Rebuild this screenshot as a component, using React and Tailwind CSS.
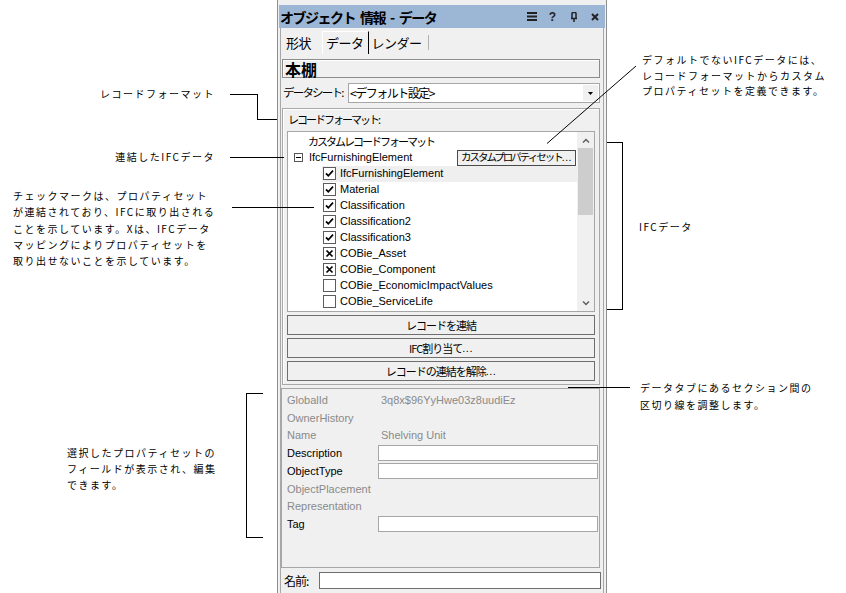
import React from "react";

const jp = "font-['Liberation_Sans','Noto_Sans_CJK_JP',sans-serif]";
const note = "font-['Noto_Sans_CJK_JP',sans-serif] text-[10px] tracking-[1.5px] text-black";

const Check = ({ mark }) => (
  <svg width="13" height="13" viewBox="0 0 13 13" className="shrink-0">
    <rect x="0.5" y="0.5" width="12" height="12" fill="#fff" stroke="#5c5c5c" />
    {mark === "check" && (
      <path d="M3 6.3 L5.3 8.8 L10 3.6" fill="none" stroke="#000" strokeWidth="1.7" />
    )}
    {mark === "x" && (
      <path d="M3.5 3.5 L9.5 9.5 M9.5 3.5 L3.5 9.5" fill="none" stroke="#000" strokeWidth="1.7" />
    )}
  </svg>
);

const Dots = () => <span className="tracking-[0.5px] font-['Liberation_Sans',sans-serif]">...</span>;

const items = [
  ["IfcFurnishingElement", "check", true],
  ["Material", "check"],
  ["Classification", "check"],
  ["Classification2", "check"],
  ["Classification3", "check"],
  ["COBie_Asset", "x"],
  ["COBie_Component", "x"],
  ["COBie_EconomicImpactValues", ""],
  ["COBie_ServiceLife", ""],
];

const fields = [
  ["GlobalId", "value", "3q8x$96YyHwe03z8uudiEz", 18],
  ["OwnerHistory", "gray", "", 18],
  ["Name", "value", "Shelving Unit", 17],
  ["Description", "input", "", 18],
  ["ObjectType", "input", "", 18],
  ["ObjectPlacement", "gray", "", 18],
  ["Representation", "gray", "", 17],
  ["Tag", "input", "", 18],
];

const buttons = [
  ["レコードを連結", false],
  ["IFC割り当て", true],
  ["レコードの連結を解除", true],
];

function Panel() {
  return (
    <div className={`w-[330px] h-[593px] shrink-0 border-x border-[#8f8f8f] bg-[#f0f0f0] pt-[5px] flex flex-col ${jp}`}>
      {/* title bar */}
      <div className="h-[23px] mx-[1px] bg-[#9cb6d6] flex items-center pl-[1px]">
        <div className="flex items-center gap-[5px] text-[14px] font-bold tracking-[-1.5px] leading-none font-['Noto_Sans_CJK_JP',sans-serif]">
          <span>オブジェクト</span>
          <span>情報</span>
          <span>-</span>
          <span>データ</span>
        </div>
        <div className="ml-auto flex items-center">
          <div className="w-[21px] flex justify-center">
            <svg width="10" height="9" viewBox="0 0 10 9">
              <path d="M0 1H10M0 4.5H10M0 8H10" stroke="#222" strokeWidth="2" />
            </svg>
          </div>
          <div className="w-[21px] flex justify-center text-[12px] font-bold leading-none text-[#222]">?</div>
          <div className="w-[21px] flex justify-center">
            <svg width="8" height="10" viewBox="0 0 8 10">
              <path d="M2 0.5V6M6 0.5V6M1 6.5H7M4 6.5V10M2 0.5H6" stroke="#222" strokeWidth="1.5" fill="none" />
            </svg>
          </div>
          <div className="w-[21px] flex justify-center">
            <svg width="8" height="8" viewBox="0 0 8 8">
              <path d="M1 1L7 7M7 1L1 7" stroke="#222" strokeWidth="2" />
            </svg>
          </div>
        </div>
      </div>

      <div className="flex-1 mx-[2px] border-x border-[#a8a8a8] flex flex-col">
        {/* tabs */}
        <div className="h-[23px] mt-[3px] flex items-stretch text-[13px] tracking-[-0.5px] font-['Noto_Sans_CJK_JP',sans-serif]">
          <span className="ml-[5px] flex items-center">形状</span>
          <div className="ml-[11px] flex items-center border-l border-t border-white border-r border-r-black pl-[3px] pr-[4px]">
            データ
          </div>
          <span className="ml-[3px] flex items-center">レンダー</span>
          <div className="ml-[6px] my-[4px] w-px bg-[#b0b0b0]" />
        </div>

        {/* record name */}
        <div className="mt-[5px] ml-[1px] mr-[3px] h-[19px] border border-[#8c8c8c] shadow-[inset_1px_1px_0_#fff] flex items-center pl-[2px]">
          <span className="text-[16px] font-bold leading-none font-['Noto_Sans_CJK_JP',sans-serif]">本棚</span>
        </div>

        {/* data sheet */}
        <div className="mt-[5px] mr-[3px] h-[20px] flex items-center">
          <span className="w-[67px] pl-[2px] text-[11.5px] tracking-[-1.8px] leading-none font-['Noto_Sans_CJK_JP',sans-serif]">
            データシート:
          </span>
          <div className="flex-1 h-[20px] bg-white border border-[#a6a6a6] flex items-center pl-[1px]">
            <span className="text-[12px] tracking-[-1.5px] leading-none font-['Noto_Sans_CJK_JP',sans-serif]">
              &lt;デフォルト設定&gt;
            </span>
            <div className="ml-auto mr-[1px] w-[15px] h-[16px] bg-[#f0f0f0] flex items-center justify-center">
              <svg width="5" height="3" viewBox="0 0 5 3">
                <path d="M0 0H5L2.5 3Z" fill="#000" />
              </svg>
            </div>
          </div>
        </div>

        {/* record format group */}
        <div className="mt-[5px] ml-[1px] mr-[3px] border border-[#a9a9a9] shadow-[inset_1px_1px_0_#fff] pt-[3px] pb-[3px] px-[4px] flex flex-col">
          <span className="h-[14px] pl-[1px] flex items-center text-[11px] tracking-[-2px] font-['Noto_Sans_CJK_JP',sans-serif]">
            レコードフォーマット:
          </span>
          <div className="mt-[5px] h-[181px] bg-white border border-[#a6a6a6] flex">
            <div className="flex-1 pt-[1.5px] text-[11px] leading-none">
              <div className="h-[16px] flex items-center pl-[20px] tracking-[-2px] font-['Noto_Sans_CJK_JP',sans-serif]">
                カスタムレコードフォーマット
              </div>
              <div className="h-[16px] flex items-center pl-[6px]">
                <svg width="9" height="9" viewBox="0 0 9 9" className="shrink-0">
                  <rect x="0.5" y="0.5" width="8" height="8" fill="#fff" stroke="#555" />
                  <path d="M2 4.5H7" stroke="#000" />
                </svg>
                <span className="ml-[6px]">IfcFurnishingElement</span>
                <div className="ml-auto mr-[1px] w-[119px] h-[16px] border border-[#4a4a4a] bg-[#f0f0f0] flex items-center justify-center overflow-hidden whitespace-nowrap text-[10.5px] tracking-[-2px] font-['Noto_Sans_CJK_JP',sans-serif]">
                  カスタムプロパティセット
                  <Dots />
                </div>
              </div>
              {items.map(([name, mark, sel]) => (
                <div key={name} className="h-[16px] flex items-center pl-[34px]">
                  <div className={`flex-1 h-[16px] flex items-center pl-[1px] ${sel ? "bg-[#efefef]" : ""}`}>
                    <Check mark={mark} />
                    <span className="ml-[4px]">{name}</span>
                  </div>
                </div>
              ))}
            </div>
            {/* scrollbar */}
            <div className="w-[17px] bg-[#f0f0f0] flex flex-col items-center">
              <div className="h-[16px] flex items-center justify-center">
                <svg width="8" height="5" viewBox="0 0 8 5">
                  <path d="M1 4.5L4 1.5L7 4.5" fill="none" stroke="#606060" strokeWidth="1.5" />
                </svg>
              </div>
              <div className="w-[15px] h-[67px] bg-[#cdcdcd]" />
              <div className="mt-auto h-[16px] flex items-center justify-center">
                <svg width="8" height="5" viewBox="0 0 8 5">
                  <path d="M1 0.5L4 3.5L7 0.5" fill="none" stroke="#606060" strokeWidth="1.5" />
                </svg>
              </div>
            </div>
          </div>
          {buttons.map(([t, dots]) => (
            <div
              key={t}
              className="mt-[3px] h-[20px] border border-[#6e6e6e] bg-[#f0f0f0] flex items-center justify-center text-[11px] tracking-[-1px] font-['Noto_Sans_CJK_JP',sans-serif]"
            >
              {t}
              {dots && <Dots />}
            </div>
          ))}
        </div>

        {/* fields */}
        <div className="mt-[3px] mr-[3px] h-[180px] border border-[#a6a6a6] pt-[2px] pl-[5px] pr-[1px] text-[11px] leading-none">
          {fields.map(([label, kind, val, h]) => (
            <div key={label} className={`flex items-center ${h === 17 ? "h-[17px]" : "h-[18px]"}`}>
              <span className={`w-[91px] ${kind === "input" ? "text-black" : "text-[#8a8a8a]"}`}>{label}</span>
              {kind === "input" ? (
                <div className="flex-1 h-[16px] bg-white border border-[#a6a6a6]" />
              ) : (
                <span className="pl-[3px] text-[#8a8a8a]">{val}</span>
              )}
            </div>
          ))}
        </div>

        {/* name */}
        <div className="mt-[4px] mr-[2px] h-[17px] flex items-center">
          <span className="w-[38px] pl-[3px] text-[12px] tracking-[-1px] leading-none font-['Noto_Sans_CJK_JP',sans-serif]">名前:</span>
          <div className="flex-1 h-[17px] bg-white border border-[#6e6e6e]" />
        </div>
      </div>
    </div>
  );
}

function Callouts() {
  return (
    <>
      <div className={`absolute right-[631px] top-[86px] leading-[16px] text-right ${note}`}>レコードフォーマット</div>
      <div className={`absolute right-[631px] top-[149px] leading-[16px] text-right ${note}`}>連結したIFCデータ</div>
      <div className={`absolute left-[13px] top-[188px] leading-[16.3px] ${note}`}>
        チェックマークは、プロパティセット
        <br />
        が連結されており、IFCに取り出される
        <br />
        ことを示しています。Xは、IFCデータ
        <br />
        マッピングによりプロパティセットを
        <br />
        取り出せないことを示しています。
      </div>
      <div className={`absolute left-[67px] top-[445px] leading-[16px] ${note}`}>
        選択したプロパティセットの
        <br />
        フィールドが表示され、編集
        <br />
        できます。
      </div>
      <div className={`absolute left-[642px] top-[52px] leading-[15.5px] ${note}`}>
        デフォルトでないIFCデータには、
        <br />
        レコードフォーマットからカスタム
        <br />
        プロパティセットを定義できます。
      </div>
      <div className={`absolute left-[639px] top-[219px] leading-[16px] ${note}`}>IFCデータ</div>
      <div className={`absolute left-[640px] top-[380px] leading-[16.7px] ${note}`}>
        データタブにあるセクション間の
        <br />
        区切り線を調整します。
      </div>

      <svg className="absolute left-0 top-0 pointer-events-none" width="846" height="593" viewBox="0 0 846 593">
        <g stroke="#000" strokeWidth="1" fill="none" shapeRendering="crispEdges">
          <path d="M230 94.5H257.5V119.5H277" />
          <path d="M230 157.5H284" />
          <path d="M232 207.5H314" />
          <path d="M263 393.5H246.5V537.5H263" />
          <path d="M607 142.5H622.5V309.5H607" />
          <path d="M568 387.5H630" />
        </g>
        <path d="M636 66L547 143.5" stroke="#000" strokeWidth="1" fill="none" />
      </svg>
    </>
  );
}

export default function App() {
  return (
    <div className={`relative w-[846px] h-[593px] bg-white overflow-hidden text-black ${jp}`}>
      <div className="flex h-full">
        <div className="w-[277px] shrink-0" />
        <Panel />
        <div className="flex-1" />
      </div>
      <Callouts />
    </div>
  );
}
